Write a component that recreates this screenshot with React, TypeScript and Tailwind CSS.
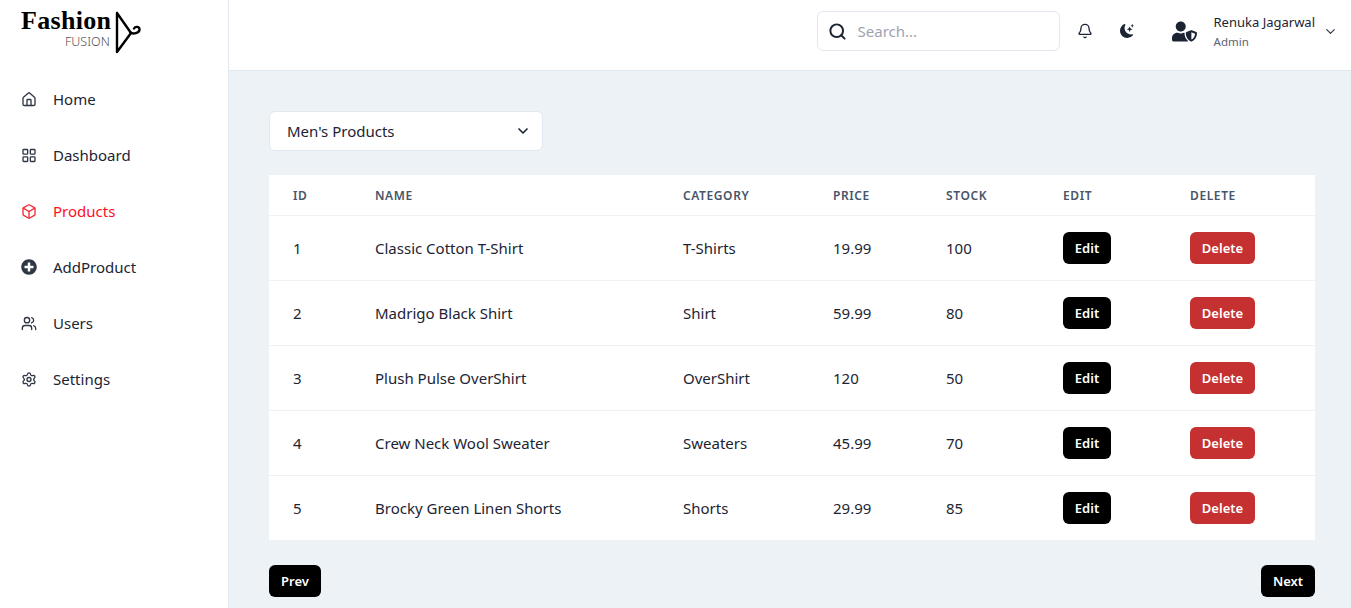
import { Bell, Box, ChevronDown, Home, LayoutGrid, Search, Settings, Users } from "lucide-react";
import { BsMoonStarsFill } from "react-icons/bs";
import { FaPlusCircle, FaUserShield } from "react-icons/fa";

const nav = [
  { label: "Home", icon: <Home size={17} /> },
  { label: "Dashboard", icon: <LayoutGrid size={17} /> },
  { label: "Products", icon: <Box size={17} />, active: true },
  { label: "AddProduct", icon: <FaPlusCircle size={16} /> },
  { label: "Users", icon: <Users size={17} /> },
  { label: "Settings", icon: <Settings size={17} /> },
];

const products = [
  { id: 1, name: "Classic Cotton T-Shirt", category: "T-Shirts", price: "19.99", stock: 100 },
  { id: 2, name: "Madrigo Black Shirt", category: "Shirt", price: "59.99", stock: 80 },
  { id: 3, name: "Plush Pulse OverShirt", category: "OverShirt", price: "120", stock: 50 },
  { id: 4, name: "Crew Neck Wool Sweater", category: "Sweaters", price: "45.99", stock: 70 },
  { id: 5, name: "Brocky Green Linen Shorts", category: "Shorts", price: "29.99", stock: 85 },
];

const heads = ["ID", "NAME", "CATEGORY", "PRICE", "STOCK", "EDIT", "DELETE"];

export default function App() {
  return (
    <div className="flex h-[608px] overflow-hidden bg-white font-['Noto_Sans',sans-serif] text-[#1c2434]">
      {/* Sidebar */}
      <aside className="w-[229px] shrink-0 border-r border-[#e2e8f0] bg-white">
        <div className="relative h-[71px]">
          <div className="absolute left-[21px] top-[8px] font-['Liberation_Serif',serif] text-[26px] leading-[26px] font-bold tracking-[0.3px] text-black">Fashion</div>
          <div className="absolute left-[65px] top-[35px] text-[12.5px] leading-[13px] font-light text-[#555]">FUSION</div>
          <svg className="absolute left-[115px] top-[11px]" width="27" height="43" viewBox="0 0 27 43" fill="none" stroke="#000" strokeWidth="2.4" strokeLinecap="round" strokeLinejoin="round">
            <path d="M2 2V41L16 22L2 2" />
            <path d="M15 21C18 24 24.5 22 24.5 18.5C24.5 15.5 20.5 15 19 17.5" />
          </svg>
        </div>
        <nav className="flex flex-col gap-[24px] pt-[12px]">
          {nav.map((n) => (
            <div key={n.label} className={`flex h-[32px] items-center gap-[16px] pl-[21px] text-[15px] ${n.active ? "text-[#ff0d1d]" : "text-[#1c2434]"}`}>
              <span className={`flex w-[16px] justify-center ${n.active ? "text-[#ef2b36]" : "text-[#2f3644]"}`}>{n.icon}</span>
              {n.label}
            </div>
          ))}
        </nav>
      </aside>

      <div className="flex min-w-0 flex-1 flex-col">
        {/* Topbar */}
        <header className="flex h-[71px] shrink-0 items-center justify-end border-b border-[#e2e8f0] bg-white pb-[8px]">
          <div className="flex h-[40px] w-[243px] items-center rounded-md border border-[#e2e8f0] pl-[10px]">
            <Search size={19} strokeWidth={2.5} className="text-[#1c2434]" />
            <span className="ml-[11px] text-[15px] text-[#9ca3af]">Search...</span>
          </div>
          <Bell size={16} className="ml-[17px] text-[#1c2434]" />
          <BsMoonStarsFill size={14} className="ml-[27px] text-[#1c2434]" />
          <FaUserShield size={25} className="ml-[38px] text-[#1c2434]" />
          <div className="ml-[17px] flex flex-col">
            <span className="text-[13px] leading-[18px] text-[#1c2434]">Renuka Jagarwal</span>
            <span className="mt-[3px] text-[11.5px] leading-[16px] text-[#5b6472]">Admin</span>
          </div>
          <ChevronDown size={15} className="mr-[13px] ml-[8px] text-[#374151]" />
        </header>

        {/* Content */}
        <main className="flex flex-1 flex-col bg-[#edf2f6] pt-[40px] pr-[36px] pl-[40px]">
          <div className="flex h-[40px] w-[274px] items-center justify-between rounded-md border border-[#e2e8f0] bg-white pr-[11px] pl-[17px] text-[15px]">
            Men's Products
            <ChevronDown size={16} strokeWidth={2.5} />
          </div>

          <table className="mt-[24px] w-[1046px] table-fixed bg-white text-[15px]">
            <colgroup>
              <col className="w-[106px]" />
              <col className="w-[308px]" />
              <col className="w-[150px]" />
              <col className="w-[113px]" />
              <col className="w-[117px]" />
              <col className="w-[127px]" />
              <col />
            </colgroup>
            <thead>
              <tr className="h-[40px] border-b border-[#edf2f6] text-left text-[12px] font-semibold tracking-[0.6px] text-[#475569]">
                {heads.map((h, i) => (
                  <th key={h} className={`pt-[2px] font-semibold ${i === 0 ? "pl-[24px]" : ""}`}>{h}</th>
                ))}
              </tr>
            </thead>
            <tbody>
              {products.map((p) => (
                <tr key={p.id} className="h-[65px] border-b border-[#edf2f6]">
                  <td className="pt-[2px] pl-[24px]">{p.id}</td>
                  <td className="pt-[2px]">{p.name}</td>
                  <td className="pt-[2px]">{p.category}</td>
                  <td className="pt-[2px]">{p.price}</td>
                  <td className="pt-[2px]">{p.stock}</td>
                  <td>
                    <button className="h-[32px] w-[48px] rounded-md bg-black pt-[2px] text-[13px] font-semibold text-white">Edit</button>
                  </td>
                  <td>
                    <button className="h-[32px] w-[65px] rounded-md bg-[#c53030] pt-[2px] text-[13px] font-semibold text-white">Delete</button>
                  </td>
                </tr>
              ))}
            </tbody>
          </table>

          <div className="mt-[24px] flex justify-between">
            <button className="h-[32px] w-[52px] rounded-md bg-black pt-[2px] text-[13px] font-semibold text-white">Prev</button>
            <button className="h-[32px] w-[54px] rounded-md bg-black pt-[2px] text-[13px] font-semibold text-white">Next</button>
          </div>
        </main>
      </div>
    </div>
  );
}
